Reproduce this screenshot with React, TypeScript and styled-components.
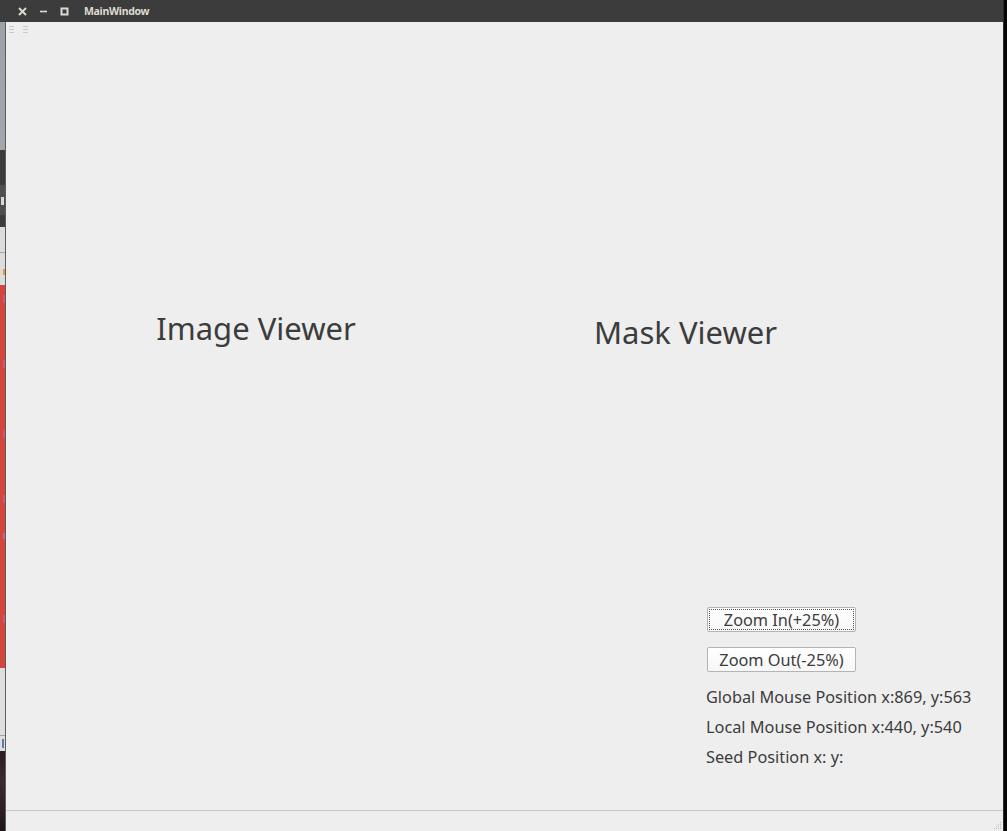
import React from "react";
import styled, { createGlobalStyle } from "styled-components";

const GlobalStyle = createGlobalStyle`
  html, body { margin: 0; padding: 0; background: #000; }
  body { width: 1007px; height: 831px; overflow: hidden; font-family: "Noto Sans", "DejaVu Sans", sans-serif; }
  #root { width: 1007px; height: 831px; }
`;

const Screen = styled.div`
  display: flex;
  width: 1007px;
  height: 831px;
`;

const MainColumn = styled.div`
  flex: 1;
  display: flex;
  flex-direction: column;
  min-width: 0;
`;

const RightEdge = styled.div`
  width: 3px;
  background: #050505;
  border-left: 1px solid #2a2a2a;
`;

const TitleBar = styled.div`
  height: 22px;
  background: #3c3c3c;
  display: flex;
  align-items: center;
  padding-left: 12px;
  flex-shrink: 0;
`;

const TitleButton = styled.div`
  width: 21px;
  height: 22px;
  display: flex;
  align-items: center;
  justify-content: center;
  color: #dfdbd2;
`;

const TitleText = styled.div`
  margin-left: 9px;
  font-family: "Noto Sans", "DejaVu Sans", sans-serif;
  font-weight: 700;
  font-size: 10.5px;
  letter-spacing: -0.3px;
  color: #dfdbd2;
`;

const BodyRow = styled.div`
  flex: 1;
  display: flex;
  min-height: 0;
`;

const DesktopStrip = styled.div`
  width: 5px;
  display: flex;
  flex-direction: column;
  flex-shrink: 0;
`;

const StripSeg = styled.div<{ $h: number; $bg: string }>`
  height: ${(p) => p.$h}px;
  background: ${(p) => p.$bg};
  flex-shrink: 0;
  position: relative;
  overflow: hidden;
`;

const StripFill = styled.div<{ $bg: string }>`
  flex: 1;
  background: ${(p) => p.$bg};
`;

const WindowBorder = styled.div`
  width: 1px;
  background: #5c5c5c;
  flex-shrink: 0;
`;

const Content = styled.div`
  flex: 1;
  display: flex;
  flex-direction: column;
  background: #eeeeee;
  min-width: 0;
`;

const ToolBar = styled.div`
  height: 14px;
  display: flex;
  align-items: flex-start;
  padding: 4px 0 0 3px;
  box-sizing: border-box;
  gap: 9px;
  flex-shrink: 0;
`;

const Grip = styled.div`
  width: 5px;
  height: 8px;
  background: repeating-linear-gradient(
    to bottom,
    #c9c9c9 0px,
    #c9c9c9 1px,
    transparent 1px,
    transparent 3px
  );
`;

const Central = styled.div`
  flex: 1;
  display: flex;
  min-height: 0;
`;

const LeftPane = styled.div`
  width: 500px;
  display: flex;
  justify-content: center;
  padding-top: 274px;
  box-sizing: border-box;
`;

const RightPane = styled.div`
  flex: 1;
  display: flex;
  flex-direction: column;
  padding-left: 88px;
  padding-bottom: 38px;
  box-sizing: border-box;
`;

const ViewerLabel = styled.div<{ $top?: number }>`
  font-family: "Noto Sans", "DejaVu Sans", sans-serif;
  font-size: 31px;
  line-height: 36px;
  height: 36px;
  color: #3c3c3c;
  margin-top: ${(p) => p.$top ?? 0}px;
  white-space: nowrap;
`;

const Controls = styled.div`
  margin-top: auto;
  margin-left: 113px;
  display: flex;
  flex-direction: column;
`;

const PushButton = styled.button<{ $focused?: boolean; $gap?: number }>`
  width: 149px;
  height: 25px;
  margin-bottom: ${(p) => p.$gap ?? 0}px;
  padding: 0;
  box-sizing: border-box;
  border: 1px solid #b4b4b4;
  border-radius: 2px;
  background: linear-gradient(to bottom, #ffffff, #f7f7f7);
  font-family: "Noto Sans", "DejaVu Sans", sans-serif;
  font-size: 16.3px;
  color: #3c3c3c;
  display: flex;
  align-items: center;
  justify-content: center;
  position: relative;
  outline: none;
  &::after {
    content: "";
    display: ${(p) => (p.$focused ? "block" : "none")};
    position: absolute;
    inset: 1px;
    border: 1px dotted #555;
  }
`;

const InfoLine = styled.div`
  font-family: "Noto Sans", "DejaVu Sans", sans-serif;
  font-size: 16.3px;
  line-height: 30px;
  height: 30px;
  color: #3c3c3c;
  white-space: nowrap;
  margin-left: -1px;
`;

const StatusSep = styled.div`
  height: 1px;
  background: #c8c8c8;
  flex-shrink: 0;
`;

const StatusBar = styled.div`
  height: 20px;
  display: flex;
  justify-content: flex-end;
  align-items: flex-end;
  padding: 0 1px 1px 0;
  box-sizing: border-box;
  flex-shrink: 0;
`;

const SizeGrip = styled.svg`
  display: block;
`;

const Blob = styled.div<{ $top: number; $h: number; $bg: string; $left?: number; $w?: number }>`
  position: absolute;
  top: ${(p) => p.$top}px;
  left: ${(p) => p.$left ?? 3}px;
  width: ${(p) => p.$w ?? 2}px;
  height: ${(p) => p.$h}px;
  background: ${(p) => p.$bg};
`;

export default function App() {
  return (
    <>
      <GlobalStyle />
      <Screen>
        <MainColumn>
          <TitleBar>
            <TitleButton>
              <svg width="9" height="9" viewBox="0 0 9 9">
                <path d="M1 1 L8 8 M8 1 L1 8" stroke="#dfdbd2" strokeWidth="1.8" />
              </svg>
            </TitleButton>
            <TitleButton>
              <svg width="9" height="9" viewBox="0 0 9 9">
                <path d="M1 4.5 H8" stroke="#dfdbd2" strokeWidth="1.6" />
              </svg>
            </TitleButton>
            <TitleButton>
              <svg width="9" height="9" viewBox="0 0 9 9">
                <rect x="1.5" y="1.5" width="6" height="6" fill="none" stroke="#dfdbd2" strokeWidth="2" />
              </svg>
            </TitleButton>
            <TitleText>MainWindow</TitleText>
          </TitleBar>
          <BodyRow>
            <DesktopStrip>
              <StripSeg $h={128} $bg="linear-gradient(to bottom, #9da2a9, #a3a7ad)" />
              <StripSeg $h={35} $bg="#3b3b3b" />
              <StripSeg $h={30} $bg="#4f4f4f">
                <Blob $top={12} $h={8} $bg="#d8d8d8" $left={1} $w={3} />
              </StripSeg>
              <StripSeg $h={12} $bg="#3c3c3c" />
              <StripSeg $h={25} $bg="#dcdcdc" />
              <StripSeg $h={1} $bg="#a8a8a8" />
              <StripSeg $h={32} $bg="#dcdcdc">
                <Blob $top={16} $h={6} $bg="#e0a030" $left={3} $w={2} />
              </StripSeg>
              <StripSeg $h={383} $bg="#d6453b">
                <Blob $top={10} $h={8} $bg="#c85a78" />
                <Blob $top={75} $h={8} $bg="#c85a78" />
                <Blob $top={145} $h={8} $bg="#c85a78" />
                <Blob $top={210} $h={8} $bg="#c85a78" />
                <Blob $top={248} $h={6} $bg="#b86aa0" />
                <Blob $top={330} $h={8} $bg="#c85a78" />
              </StripSeg>
              <StripSeg $h={67} $bg="#dedede" />
              <StripSeg $h={1} $bg="#a0a0a0" />
              <StripSeg $h={15} $bg="#dedede">
                <Blob $top={3} $h={9} $bg="#6a7aa0" $left={2} $w={2} />
              </StripSeg>
              <StripFill $bg="linear-gradient(to bottom, #2a1e1e, #3a2a30 40%, #1e1616)" />
            </DesktopStrip>
            <WindowBorder />
            <Content>
              <ToolBar>
                <Grip />
                <Grip />
              </ToolBar>
              <Central>
                <LeftPane>
                  <ViewerLabel>Image Viewer</ViewerLabel>
                </LeftPane>
                <RightPane>
                  <ViewerLabel $top={278}>Mask Viewer</ViewerLabel>
                  <Controls>
                    <PushButton $focused $gap={15}>Zoom In(+25%)</PushButton>
                    <PushButton $gap={10}>Zoom Out(-25%)</PushButton>
                    <InfoLine>Global Mouse Position x:869, y:563</InfoLine>
                    <InfoLine>Local Mouse Position x:440, y:540</InfoLine>
                    <InfoLine>Seed Position x: y:</InfoLine>
                  </Controls>
                </RightPane>
              </Central>
              <StatusSep />
              <StatusBar>
                <SizeGrip width="8" height="8" viewBox="0 0 8 8">
                  <rect x="6" y="0" width="1" height="1" fill="#bdbdbd" />
                  <rect x="4" y="2" width="1" height="1" fill="#bdbdbd" />
                  <rect x="6" y="2" width="1" height="1" fill="#bdbdbd" />
                  <rect x="2" y="4" width="1" height="1" fill="#bdbdbd" />
                  <rect x="4" y="4" width="1" height="1" fill="#bdbdbd" />
                  <rect x="6" y="4" width="1" height="1" fill="#bdbdbd" />
                  <rect x="0" y="6" width="1" height="1" fill="#bdbdbd" />
                  <rect x="2" y="6" width="1" height="1" fill="#bdbdbd" />
                  <rect x="4" y="6" width="1" height="1" fill="#bdbdbd" />
                  <rect x="6" y="6" width="1" height="1" fill="#bdbdbd" />
                </SizeGrip>
              </StatusBar>
            </Content>
          </BodyRow>
        </MainColumn>
        <RightEdge />
      </Screen>
    </>
  );
}
